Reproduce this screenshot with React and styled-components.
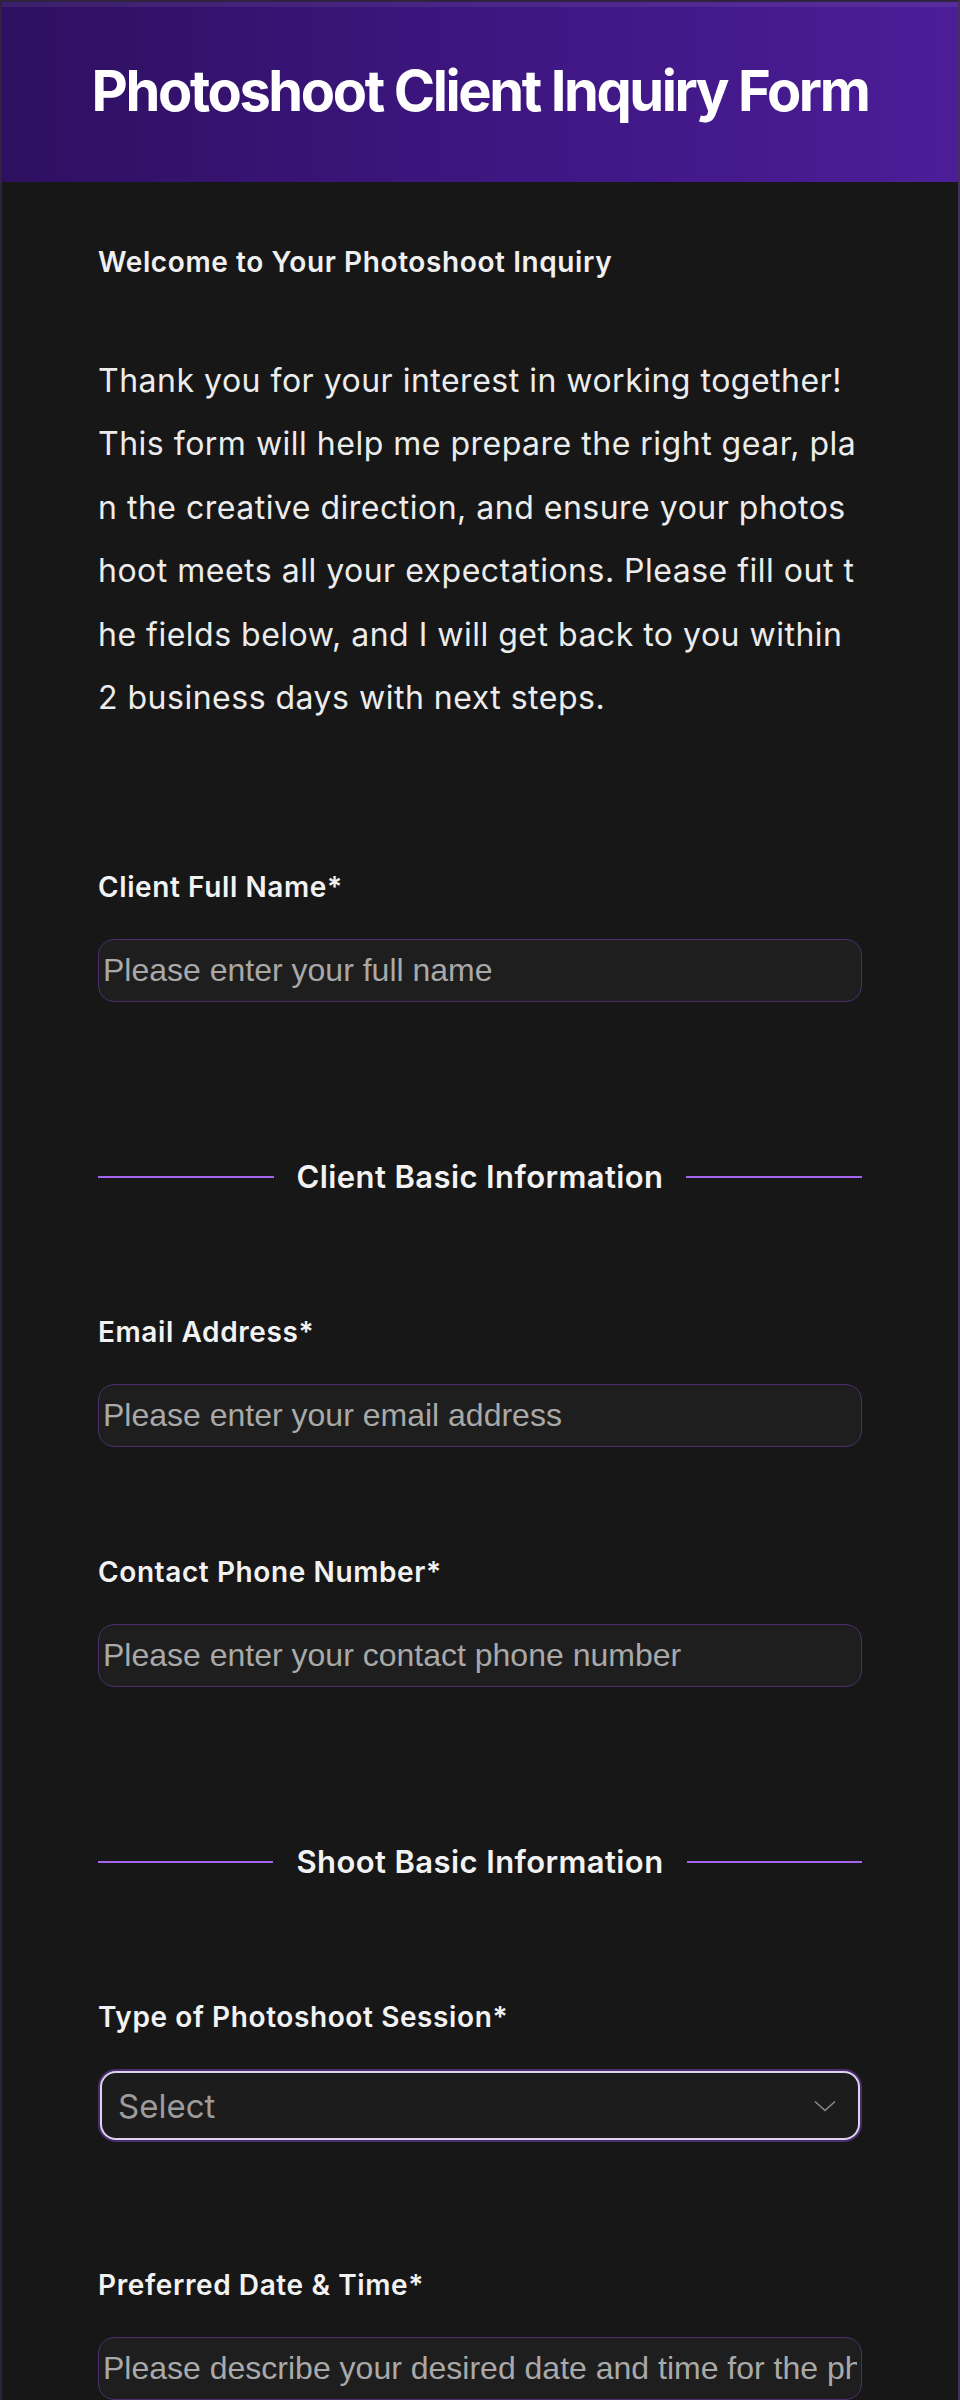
import styled, { createGlobalStyle } from 'styled-components';

const GlobalStyle = createGlobalStyle`
    html, body {
        margin: 0;
        padding: 0;
        background: #171717;
    }
    * {
        box-sizing: border-box;
    }
`

const App = () => {
    return (
        <>
            <GlobalStyle />
            <Page>
                <Header>
                    <Title>Photoshoot Client Inquiry Form</Title>
                </Header>

                <Content>
                    <Welcome>Welcome to Your Photoshoot Inquiry</Welcome>
                    <Intro>
                        Thank you for your interest in working together! This form will help me prepare the right gear, plan the creative direction, and ensure your photoshoot meets all your expectations. Please fill out the fields below, and I will get back to you within 2 business days with next steps.
                    </Intro>

                    <Field>
                        <Label>Client Full Name*</Label>
                        <Input placeholder="Please enter your full name" />
                    </Field>

                    <Divider>
                        <Line />
                        <DividerText>Client Basic Information</DividerText>
                        <Line />
                    </Divider>

                    <Field>
                        <Label>Email Address*</Label>
                        <Input placeholder="Please enter your email address" />
                    </Field>

                    <Field>
                        <Label>Contact Phone Number*</Label>
                        <Input placeholder="Please enter your contact phone number" />
                    </Field>

                    <Divider>
                        <Line />
                        <DividerText>Shoot Basic Information</DividerText>
                        <Line />
                    </Divider>

                    <Field>
                        <Label>Type of Photoshoot Session*</Label>
                        <SelectBox>
                            <SelectText>Select</SelectText>
                            <svg width="22" height="12" viewBox="0 0 22 12" fill="none">
                                <path d="M1 1.5 L11 10.5 L21 1.5" stroke="#8a8a8a" strokeWidth="1.6" />
                            </svg>
                        </SelectBox>
                    </Field>

                    <Field>
                        <Label>Preferred Date &amp; Time*</Label>
                        <Input placeholder="Please describe your desired date and time for the photoshoot" />
                    </Field>
                </Content>
            </Page>
        </>
    );
}

const Page = styled.div`
    min-height: 2400px;
    border: 2px solid #30233f;
    border-right-color: #43305c;
    background: #171717;
`

const Header = styled.header`
    height: 180px;
    display: flex;
    align-items: center;
    justify-content: center;
    background: linear-gradient(90deg, #2e1060 0%, #3d1680 50%, #4c1d98 100%);
    box-shadow: inset 0 5px 0 rgba(255, 255, 255, 0.07);
`

const Title = styled.h1`
    margin: 0;
    font-family: Inter, "Noto Sans", sans-serif;
    font-size: 56px;
    font-weight: 700;
    letter-spacing: -2.4px;
    line-height: 1.2;
    color: #ffffff;
`

const Content = styled.main`
    display: flex;
    flex-direction: column;
    padding: 0 96px 40px;
    font-family: Inter, "Noto Sans", sans-serif;
    color: #f0f0f0;
`

const Welcome = styled.h2`
    margin: 61px 0 0;
    font-size: 28px;
    font-weight: 600;
    letter-spacing: 0.6px;
    line-height: 39px;
`

const Intro = styled.p`
    margin: 67px 0 33px;
    font-size: 32px;
    font-weight: 400;
    letter-spacing: 0.5px;
    line-height: 63.4px;
    color: #ececec;
    word-break: break-all;
`

const Field = styled.div`
    display: flex;
    flex-direction: column;
    margin-top: 106px;
`

const Label = styled.label`
    font-size: 28px;
    font-weight: 600;
    letter-spacing: 0.6px;
    line-height: 39px;
    color: #f2f2f2;
    margin-bottom: 32px;
`

const Input = styled.input`
    height: 63px;
    width: 100%;
    padding: 0 4px;
    border: 1.5px solid #4a2e6c;
    border-radius: 16px;
    background: #1e1e1e;
    color: #e0e0e0;
    font-family: "Liberation Sans", Arial, sans-serif;
    font-size: 32px;
    outline: none;

    &::placeholder {
        color: #a9a9a9;
    }
`

const Divider = styled.div`
    display: flex;
    align-items: center;
    gap: 23px;
    margin: 152px 0 8px;
    height: 45px;
`

const Line = styled.span`
    flex: 1;
    height: 2px;
    background: #a462f0;
`

const DividerText = styled.span`
    font-size: 31px;
    font-weight: 600;
    letter-spacing: 0.4px;
    line-height: 45px;
    color: #f2f2f2;
    white-space: nowrap;
`

const SelectBox = styled.div`
    height: 69px;
    margin: 2px 2px 20px;
    padding: 0 22px 0 16px;
    display: flex;
    align-items: center;
    justify-content: space-between;
    border: 2px solid #ddd2ef;
    border-radius: 16px;
    background: #1c1c1c;
    box-shadow: 0 0 0 2px #4a2e6c;
`

const SelectText = styled.span`
    font-size: 33px;
    color: #9c9c9c;
`

export default App;
